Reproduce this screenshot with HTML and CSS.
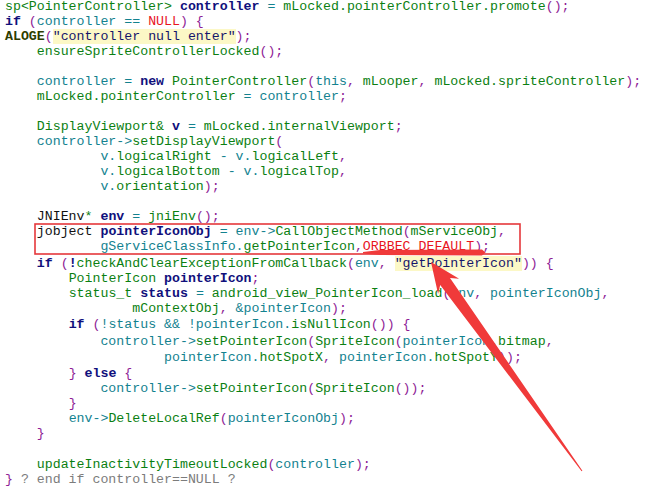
FILE: index.html
```html
<!DOCTYPE html>
<html lang="en">
<head>
    <meta charset="UTF-8">
    <meta name="viewport" content="width=device-width, initial-scale=1.0">
    <title>PointerController - source view</title>
    <link rel="stylesheet" href="styles.css">
</head>
<body>
    <div class="page">
        <div class="code">
<div class="ln"><span class="t">sp&lt;PointerController&gt;</span> <span class="d">controller</span> <span class="v">=</span> <span class="t">mLocked.pointerController.promote</span><span class="p">();</span></div>
<div class="ln"><span class="k">if</span> <span class="p">(</span><span class="v">controller ==</span> <span class="n">NULL</span><span class="p">) {</span></div>
<div class="ln"><span class="m">ALOGE</span><span class="p">(</span><span class="s">"controller null enter"</span><span class="p">);</span></div>
<div class="ln">    <span class="t">ensureSpriteControllerLocked</span><span class="p">();</span></div>
<div class="ln"></div>
<div class="ln">    <span class="v">controller =</span> <span class="k">new</span> <span class="t">PointerController</span><span class="p">(</span><span class="v">this</span><span class="p">,</span> <span class="t">mLooper</span><span class="p">,</span> <span class="t">mLocked.spriteController</span><span class="p">);</span></div>
<div class="ln">    <span class="t">mLocked.pointerController</span> <span class="v">= controller</span><span class="p">;</span></div>
<div class="ln"></div>
<div class="ln">    <span class="t">DisplayViewport&amp;</span> <span class="d">v</span> <span class="v">=</span> <span class="t">mLocked.internalViewport</span><span class="p">;</span></div>
<div class="ln">    <span class="v">controller-&gt;</span><span class="t">setDisplayViewport</span><span class="p">(</span></div>
<div class="ln">            <span class="v">v.</span><span class="t">logicalRight</span> <span class="v">- v.</span><span class="t">logicalLeft</span><span class="p">,</span></div>
<div class="ln">            <span class="v">v.</span><span class="t">logicalBottom</span> <span class="v">- v.</span><span class="t">logicalTop</span><span class="p">,</span></div>
<div class="ln">            <span class="v">v.</span><span class="t">orientation</span><span class="p">);</span></div>
<div class="ln"></div>
<div class="ln">    <span class="b">JNIEnv</span><span class="t">*</span> <span class="d">env</span> <span class="v">=</span> <span class="t">jniEnv</span><span class="p">();</span></div>
<div class="ln">    <span class="b">jobject</span> <span class="d">pointerIconObj</span> <span class="v">= env-&gt;</span><span class="t">CallObjectMethod</span><span class="p">(</span><span class="t">mServiceObj</span><span class="p">,</span></div>
<div class="ln">            <span class="v">gServiceClassInfo.</span><span class="t">getPointerIcon</span><span class="p">,</span><span class="n">ORBBEC_DEFAULT</span><span class="p">);</span></div>
<div class="ln g2">    <span class="k">if</span> <span class="p">(</span><span class="k">!</span><span class="t">checkAndClearExceptionFromCallback</span><span class="p">(</span><span class="v">env</span><span class="p">,</span> <span class="s">"getPointerIcon"</span><span class="p">)) {</span></div>
<div class="ln">        <span class="t">PointerIcon</span> <span class="d">pointerIcon</span><span class="p">;</span></div>
<div class="ln">        <span class="t">status_t</span> <span class="d">status</span> <span class="v">=</span> <span class="t">android_view_PointerIcon_load</span><span class="p">(</span><span class="v">env</span><span class="p">,</span> <span class="v">pointerIconObj</span><span class="p">,</span></div>
<div class="ln">                <span class="t">mContextObj</span><span class="p">,</span> <span class="v">&amp;pointerIcon</span><span class="p">);</span></div>
<div class="ln g1">        <span class="k">if</span> <span class="p">(</span><span class="v">!status &amp;&amp; !pointerIcon.</span><span class="t">isNullIcon</span><span class="p">()) {</span></div>
<div class="ln g2">            <span class="v">controller-&gt;</span><span class="t">setPointerIcon</span><span class="p">(</span><span class="t">SpriteIcon</span><span class="p">(</span><span class="v">pointerIcon.</span><span class="t">bitmap</span><span class="p">,</span></div>
<div class="ln g1">                    <span class="v">pointerIcon.</span><span class="t">hotSpotX</span><span class="p">,</span> <span class="v">pointerIcon.</span><span class="t">hotSpotY</span><span class="p">));</span></div>
<div class="ln g1">        <span class="p">}</span> <span class="k">else</span> <span class="p">{</span></div>
<div class="ln">            <span class="v">controller-&gt;</span><span class="t">setPointerIcon</span><span class="p">(</span><span class="t">SpriteIcon</span><span class="p">());</span></div>
<div class="ln">        <span class="p">}</span></div>
<div class="ln">        <span class="v">env-&gt;</span><span class="t">DeleteLocalRef</span><span class="p">(</span><span class="v">pointerIconObj</span><span class="p">);</span></div>
<div class="ln">    <span class="p">}</span></div>
<div class="ln"></div>
<div class="ln g1">    <span class="t">updateInactivityTimeoutLocked</span><span class="p">(</span><span class="v">controller</span><span class="p">);</span></div>
<div class="ln"><span class="p">}</span> <span class="c">? end if controller==NULL ?</span></div>
        </div>

        <!-- annotation drawn over the code -->
        <svg class="marks" width="657" height="492" viewBox="0 0 657 492">
            <rect x="35" y="224" width="485" height="30" fill="none" stroke="#e5383b" stroke-width="1.6"/>
            <polygon points="363,252 380,250 482,249.6 485.5,252.4 482,255.6 380,255 363,253.4" fill="#f03a3a"/>
            <polygon points="431,262 459.1,278.7 450,278 582.4,470.7 581.6,471.3 440.2,285 438.1,293.9" fill="#f03a3a"/>
        </svg>
    </div>
</body>
</html>
```

FILE: styles.css
```css
body {
    margin: 0;
    background: #ffffff;
}

.page {
    position: relative;
    height: 492px;
    overflow: hidden;
}

.code {
    font-family: "Liberation Mono", "DejaVu Sans Mono", monospace;
    font-size: 13.25px;
    line-height: 15px;
    padding-left: 5px;
    margin-top: -1px;
    color: #111111;
}

.ln {
    min-height: 15px;
    white-space: pre;
}

.g1 {
    padding-top: 1px;
}

.g2 {
    padding-top: 2px;
}

/* syntax colours */
.t { color: #0b7f12; }
.v { color: #13828f; }
.k { color: #10107c; font-weight: bold; }
.d { color: #10107c; font-weight: bold; }
.p { color: #8e1d96; }
.n { color: #e8141e; }
.m { color: #2e3d00; font-weight: bold; }
.b { color: #111111; }
.c { color: #7c7c7c; }

.s {
    color: #15156a;
    background: #fcf8c6;
}

.marks {
    position: absolute;
    top: 0;
    left: 0;
    pointer-events: none;
}
```
